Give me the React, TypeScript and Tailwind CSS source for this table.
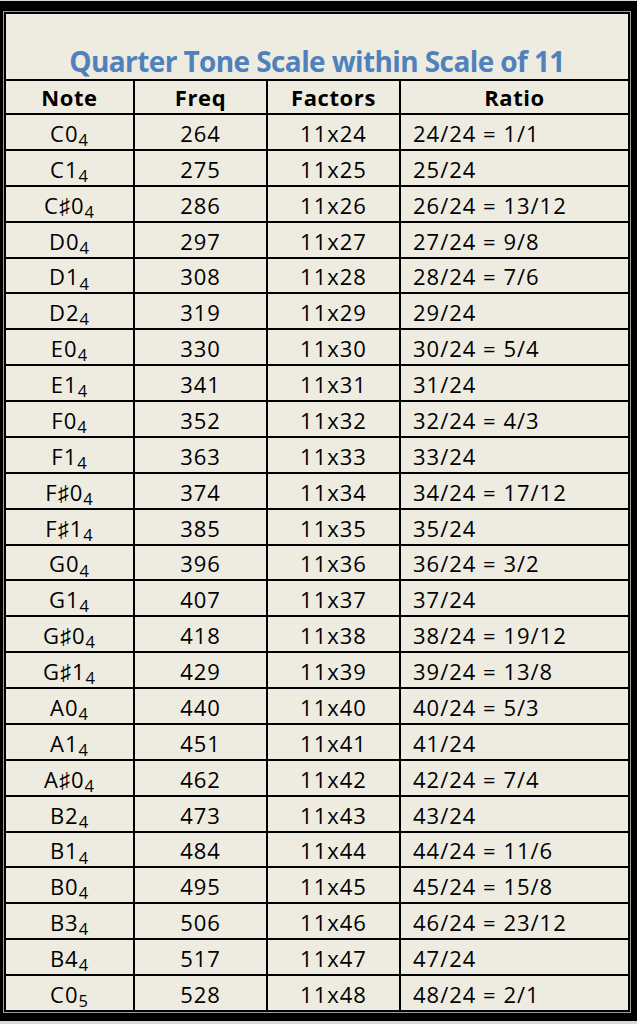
const notes: Array<[string, string, string]> = [
  ["C", "0", "4"],
  ["C", "1", "4"],
  ["C♯", "0", "4"],
  ["D", "0", "4"],
  ["D", "1", "4"],
  ["D", "2", "4"],
  ["E", "0", "4"],
  ["E", "1", "4"],
  ["F", "0", "4"],
  ["F", "1", "4"],
  ["F♯", "0", "4"],
  ["F♯", "1", "4"],
  ["G", "0", "4"],
  ["G", "1", "4"],
  ["G♯", "0", "4"],
  ["G♯", "1", "4"],
  ["A", "0", "4"],
  ["A", "1", "4"],
  ["A♯", "0", "4"],
  ["B", "2", "4"],
  ["B", "1", "4"],
  ["B", "0", "4"],
  ["B", "3", "4"],
  ["B", "4", "4"],
  ["C", "0", "5"],
]

const reduced: Record<number, string> = {
  24: "1/1",
  26: "13/12",
  27: "9/8",
  28: "7/6",
  30: "5/4",
  32: "4/3",
  34: "17/12",
  36: "3/2",
  38: "19/12",
  39: "13/8",
  40: "5/3",
  42: "7/4",
  44: "11/6",
  45: "15/8",
  46: "23/12",
  48: "2/1",
}

const rows = notes.map((note, i) => {
  const n = 24 + i
  return {
    note,
    freq: 11 * n,
    factors: `11x${n}`,
    ratio: reduced[n] ? `${n}/24 = ${reduced[n]}` : `${n}/24`,
  }
})

export default function App() {
  return (
    <div className="h-[1024px] w-[637px] bg-[#d8d8d8] pt-px font-['Open_Sans',sans-serif] text-black">
      <div className="bg-black pt-[10px] pb-[8px] pl-[3px] pr-[6px]">
        <div className="border border-[#9c9c9c]">
          <div className="border-2 border-black bg-[#eeece1]">
            {/* Title */}
            <div className="flex h-[65px] items-end justify-center pb-[4px] text-[28px] font-bold leading-none tracking-[-0.6px] text-[#4f81bd]">
              Quarter Tone Scale within Scale of 11
            </div>

            {/* Header */}
            <div className="flex h-[34px] border-t-2 border-black text-[22px] font-bold tracking-[0.6px]">
              <div className="flex w-[127px] items-center justify-center">Note</div>
              <div className="flex w-[133px] items-center justify-center border-l-2 border-black">Freq</div>
              <div className="flex w-[133px] items-center justify-center border-l-2 border-black">Factors</div>
              <div className="flex flex-1 items-center justify-center border-l-2 border-black">Ratio</div>
            </div>

            {/* Rows */}
            {rows.map((r) => (
              <div key={r.factors} className="flex h-[35.88px] border-t-2 border-black text-[22px] leading-none tracking-[1px]">
                <div className="flex w-[127px] items-center justify-center pt-[2px]">
                  <span>
                    {r.note[0]}
                    {r.note[1]}
                    <sub>{r.note[2]}</sub>
                  </span>
                </div>
                <div className="flex w-[133px] items-center justify-center border-l-2 border-black pt-[2px]">
                  {r.freq}
                </div>
                <div className="flex w-[133px] items-center justify-center border-l-2 border-black pt-[2px]">
                  {r.factors}
                </div>
                <div className="flex flex-1 items-center border-l-2 border-black pl-[12px] pt-[2px]">
                  {r.ratio}
                </div>
              </div>
            ))}
          </div>
        </div>
      </div>
    </div>
  )
}
